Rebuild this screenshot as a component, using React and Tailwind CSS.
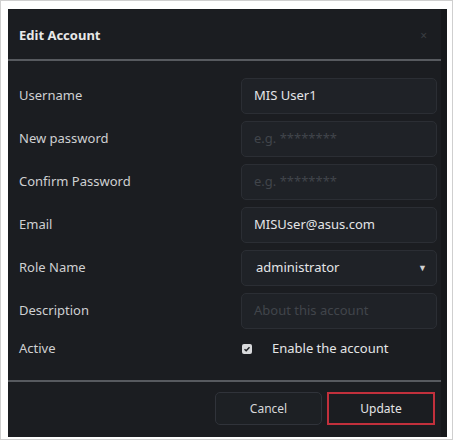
import React from 'react';

const rows = [
  { label: 'Username', value: 'MIS User1' },
  { label: 'New password', placeholder: 'e.g. ********' },
  { label: 'Confirm Password', placeholder: 'e.g. ********' },
  { label: 'Email', value: 'MISUser@asus.com' },
  { label: 'Role Name', value: 'administrator', select: true },
  { label: 'Description', placeholder: 'About this account' },
];

const Field = ({ row }) => (
  <div className="flex items-center h-[36px]">
    <div className="w-[222px] text-[13px] text-[#cfd0d2]">{row.label}</div>
    <div className="flex-1 h-full flex items-center justify-between rounded-[5px] bg-[#1f2227] border border-[#2b2e34] pl-[12px] pr-[9px] text-[13px]">
      {row.value ? (
        <span className={row.select ? 'text-[#e4e5e7] pl-[2px]' : 'text-[#e4e5e7]'}>{row.value}</span>
      ) : (
        <span className="text-[#41454b]">{row.placeholder}</span>
      )}
      {row.select && <span className="text-[9px] text-[#d0d0d0]">▼</span>}
    </div>
  </div>
);

const App = () => {
  return (
    <div
      className="w-[453px] h-[440px] bg-white border border-[#cfcfcf] pt-[8px] pl-[7px] pr-[5px] pb-[2px]"
      style={{ fontFamily: '"Noto Sans", "Open Sans", sans-serif' }}
    >
      <div className="h-full flex flex-col bg-[#1b1d21] border-r-[6px] border-[#16181b]">
        {/* Header */}
        <div className="h-[52px] flex items-center justify-between pl-[11px] pr-[14px] pt-[4px] border-b-2 border-[#575a5f]">
          <span className="text-[13px] font-bold text-[#e8e8e8]">Edit Account</span>
          <span className="text-[12px] text-[#3a3d42]">×</span>
        </div>

        {/* Body */}
        <div className="flex-1 flex flex-col gap-[7px] pt-[17px] pl-[11px] pr-[4px]">
          {rows.map(row => (
            <Field key={row.label} row={row} />
          ))}
          <div className="flex items-center h-[26px]">
            <div className="w-[222px] text-[13px] text-[#cfd0d2]">Active</div>
            <div className="flex items-center">
              <span className="w-[10px] h-[10px] rounded-[2px] bg-[#d8d9db] flex items-center justify-center ml-[1px]">
                <svg width="8" height="8" viewBox="0 0 8 8">
                  <path d="M1.5 4.2 L3.2 5.8 L6.5 2.2" stroke="#1b1d21" strokeWidth="1.4" fill="none" />
                </svg>
              </span>
              <span className="ml-[20px] text-[13px] text-[#e4e5e7]">Enable the account</span>
            </div>
          </div>
        </div>

        {/* Footer */}
        <div className="h-[57px] border-t-2 border-[#575a5f] flex items-center justify-end gap-[5px] pr-[6px] pb-[2px]">
          <button className="w-[107px] h-[33px] rounded-[5px] bg-[#1d2024] border border-[#30333a] text-[12px] text-[#d6d7d9]">
            Cancel
          </button>
          <button className="w-[108px] h-[33px] bg-[#1b1d21] border-2 border-[#c2303c] text-[12px] text-[#e4e5e7]">
            Update
          </button>
        </div>
      </div>
    </div>
  );
};

export default App;
